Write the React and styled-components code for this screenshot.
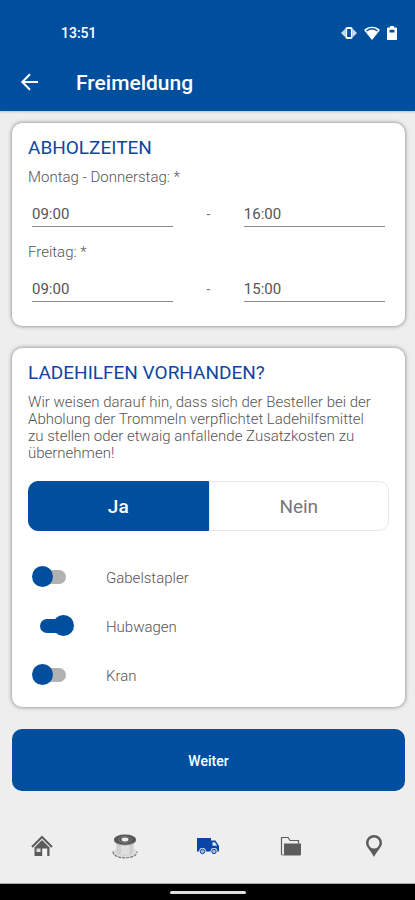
import React, { useState } from 'react';
import styled, { createGlobalStyle } from 'styled-components';

const GlobalStyle = createGlobalStyle`
* {
  box-sizing: border-box;
}
body {
  margin: 0;
  background-color: #eeeeee;
  color: #777777;
  font-family: Roboto, "Liberation Sans", sans-serif;
  font-size: 14px;
}
button, input {
  font-family: inherit;
}
`

const Page = styled.div`
display: flex;
flex-direction: column;
min-height: 100vh;
`
const Header = styled.header`
background-color: #004f9f;
color: white;
box-shadow: 0 1px 2px rgba(0, 0, 0, 0.2);
`
const StatusBar = styled.div`
display: flex;
align-items: center;
justify-content: space-between;
height: 55px;
padding: 11px 18px 0 61px;
font-size: 14px;
font-weight: 500;
`
const StatusIcons = styled.div`
display: flex;
align-items: center;
gap: 7px;
`
const AppBar = styled.div`
display: flex;
align-items: center;
gap: 36px;
height: 56px;
padding: 0 20px;
`
const BackButton = styled.button`
display: flex;
padding: 0;
border: none;
background: none;
color: white;
`
const Title = styled.h1`
margin: 0;
font-size: 21px;
font-weight: 500;
`
const Main = styled.main`
display: flex;
flex-direction: column;
gap: 22px;
padding: 12px 10px 0 12px;
`
const Card = styled.section`
padding: 13px 16px ${props => props.$bottom}px;
background-color: white;
border-radius: 10px;
box-shadow: 0 0 4px rgba(0, 0, 0, 0.5);
`
const CardTitle = styled.h2`
margin: 0 0 9px;
color: #0d47a1;
font-size: 19px;
font-weight: 400;
line-height: 24px;
`
const Hint = styled.p`
margin: 0 0 19px;
padding-right: 8px;
color: #555555;
font-size: 15px;
font-weight: 300;
line-height: 17px;
`
const TimeGroup = styled.fieldset`
min-width: 0;
margin: 0;
padding: 0;
border: none;

& + & {
  margin-top: 17px;
}
`
const TimeLabel = styled.legend`
padding: 0;
color: #555555;
font-size: 15px;
font-weight: 300;
line-height: 17px;
`
const TimeRange = styled.div`
display: grid;
grid-template-columns: 2fr 1fr 2fr;
align-items: center;
padding: 15px 4px 0;
text-align: center;
`
const TimeInput = styled.input`
width: 100%;
height: 26px;
padding: 0;
border: none;
border-bottom: 1px solid #8a8a8a;
border-radius: 0;
background: none;
color: #555555;
font-size: 15px;
outline: none;
`
const Toggle = styled.div`
display: flex;
height: 50px;
margin-bottom: 21px;
`
const ToggleButton = styled.button`
flex: 1;
border: 1px solid ${props => props.$active ? '#004f9f' : '#e8e8e8'};
background-color: ${props => props.$active ? '#004f9f' : 'white'};
color: ${props => props.$active ? 'white' : '#777777'};
font-size: 19px;
font-weight: ${props => props.$active ? 500 : 400};

&:first-child {
  border-radius: 10px 0 0 10px;
}
&:last-child {
  border-radius: 0 10px 10px 0;
}
`
const SwitchRow = styled.label`
display: flex;
align-items: center;
gap: 32px;
height: 49px;
padding-left: 4px;
`
const SwitchText = styled.span`
padding-top: 2px;
color: #555555;
font-size: 15px;
font-weight: 300;
`
const Switch = styled.input`
appearance: none;
display: grid;
align-items: center;
width: 42px;
height: 21px;
margin: 0;

&::before, &::after {
  content: '';
  grid-area: 1 / 1;
  background-color: #004f9f;
}
&::before {
  width: 30px;
  height: 14px;
  margin: 0 4px;
  border-radius: 7px;
  background-color: #b2b2b2;
}
&::after {
  width: 21px;
  height: 21px;
  border-radius: 50%;
}
&:checked {
  justify-items: end;
}
&:checked::before {
  background-color: #004f9f;
}
`
const SubmitButton = styled.button`
height: 62px;
padding-top: 3px;
border: none;
border-radius: 10px;
background-color: #004f9f;
color: white;
font-size: 14px;
font-weight: 500;
`
const TabBar = styled.nav`
display: grid;
grid-template-columns: repeat(5, 1fr);
flex: 1;
min-height: 93px;
border-bottom: 1px solid #aaaaaa;
`
const Tab = styled.a`
display: flex;
align-items: center;
justify-content: center;
padding-top: 17px;
color: ${props => props.$active ? '#0a45a5' : '#5c5c5c'};
`
const SystemBar = styled.div`
display: flex;
align-items: center;
justify-content: center;
height: 16px;
background-color: black;
`
const HomeIndicator = styled.div`
width: 76px;
height: 3px;
border-radius: 2px;
background-color: #dddddd;
`

const VibrateIcon = () => (
    <svg width="16" height="12" viewBox="0 0 16 12">
        <path d="M0 6l4-4v8zM16 6l-4-4v8z" fill="#c9dbef" />
        <rect x="5.2" y="1" width="5.6" height="10" rx="1" fill="none" stroke="white" strokeWidth="1.8" />
    </svg>
)

const WifiIcon = () => (
    <svg width="16" height="14" viewBox="0 0 16 14">
        <path d="M8 14L0 4c4.500-4.200 11.500-4.200 16 0z" fill="white" />
        <path d="M2.500 4.900c3.300-2.600 7.700-2.600 11 0" fill="none" stroke="#004f9f" strokeWidth="1.300" />
    </svg>
)

const BatteryIcon = () => (
    <svg width="10" height="14" viewBox="0 0 10 14">
        <path d="M3 0h4v1.500h2.200q.8 0 .8.800v10.900q0 .8-.8.800H.8q-.8 0-.8-.8V2.300q0-.8.8-.8H3z" fill="white" />
        <path d="M2.500 3.800h5v2.700h-5z" fill="#004f9f" />
    </svg>
)

const BackIcon = () => (
    <svg width="20" height="20" viewBox="0 0 20 20" fill="none" stroke="currentColor" strokeWidth="2">
        <path d="M18 9H3M10 1.300L2.300 9l7.700 7.700" />
    </svg>
)

const HouseIcon = () => (
    <svg width="22" height="22" viewBox="0 0 22 22">
        <path d="M1 12L11 2l10 10" fill="none" stroke="currentColor" strokeWidth="2" />
        <path d="M11 5l7.500 7.500V21h-15v-8.500z" fill="currentColor" />
        <path d="M5.500 13.500h4v3.500h-4z" fill="#dddddd" />
        <path d="M11.200 13.500h5V21h-5z" fill="#f4f4f4" />
    </svg>
)

const DrumIcon = () => (
    <svg width="26" height="26" viewBox="0 0 26 26">
        <ellipse cx="13" cy="19.500" rx="12" ry="5.500" fill="#dedede" />
        <path d="M1 18.500c0 8.500 24 8.500 24 0" fill="none" stroke="#777777" strokeWidth="1.200" strokeDasharray="3 1" />
        <path d="M4.500 7h17v13c-3 3.500-14 3.500-17 0z" fill="#cfcfcf" />
        <path d="M9 11h8v11H9z" fill="#dedede" />
        <ellipse cx="13" cy="7.500" rx="11" ry="5" fill="#8a8a8a" />
        <ellipse cx="13" cy="6.500" rx="11" ry="5" fill="#555555" />
        <ellipse cx="13" cy="6.500" rx="6.500" ry="2.900" fill="none" stroke="#808080" />
        <ellipse cx="13" cy="6.500" rx="3.500" ry="1.900" fill="#eeeeee" />
    </svg>
)

const TruckIcon = () => (
    <svg width="24" height="20" viewBox="0 0 24 20">
        <path d="M1 2h14v13.500H1z" fill="currentColor" />
        <path d="M15 4.500h4.500l3.500 5.500v5.500h-8z" fill="currentColor" />
        <path d="M16.500 6.200h2.300l2.400 3.600h-4.700z" fill="#dfe6f2" />
        <circle cx="6.500" cy="15.500" r="3.400" fill="#eeeeee" />
        <circle cx="18" cy="15.500" r="3.400" fill="#eeeeee" />
        <circle cx="6.500" cy="15.500" r="2.200" fill="#a9bce0" stroke="currentColor" />
        <circle cx="18" cy="15.500" r="2.200" fill="#a9bce0" stroke="currentColor" />
    </svg>
)

const FolderIcon = () => (
    <svg width="22" height="20" viewBox="0 0 22 20">
        <path d="M1.500 18V1.500h6.500l2 3h8.500v3M1.500 18q0 1 1 1" fill="none" stroke="currentColor" strokeWidth="1.200" />
        <path d="M4 7.500h17V18q0 1.500-1.500 1.500h-17Q4 19 4 17.500z" fill="currentColor" />
    </svg>
)

const PinIcon = () => (
    <svg width="18" height="24" viewBox="0 0 18 24">
        <path fillRule="evenodd" d="M9 1a8 8 0 0 1 8 8c0 4-4.500 7-8 14C5.500 16 1 13 1 9a8 8 0 0 1 8-8zM9 3.500a5.500 5.500 0 1 0 0 11 5.500 5.500 0 0 0 0-11z" fill="currentColor" />
    </svg>
)

const tabs = [
    { name: 'Start', href: '#start', Icon: HouseIcon },
    { name: 'Trommeln', href: '#trommeln', Icon: DrumIcon },
    { name: 'Freimeldung', href: '#freimeldung', Icon: TruckIcon, active: true },
    { name: 'Dokumente', href: '#dokumente', Icon: FolderIcon },
    { name: 'Standorte', href: '#standorte', Icon: PinIcon },
]

const TimeRow = ({ label, from, to }) => (
    <TimeGroup>
        <TimeLabel>{label}: *</TimeLabel>
        <TimeRange>
            <TimeInput aria-label={label + ' von'} defaultValue={from} />
            <span>-</span>
            <TimeInput aria-label={label + ' bis'} defaultValue={to} />
        </TimeRange>
    </TimeGroup>
)

const SwitchField = ({ label, on }) => (
    <SwitchRow>
        <Switch type="checkbox" defaultChecked={on} />
        <SwitchText>{label}</SwitchText>
    </SwitchRow>
)

const App = () => {
    const [hasAids, setHasAids] = useState(true)

    return (
        <Page>
            <GlobalStyle />
            <Header>
                <StatusBar>
                    <span>13:51</span>
                    <StatusIcons>
                        <VibrateIcon />
                        <WifiIcon />
                        <BatteryIcon />
                    </StatusIcons>
                </StatusBar>
                <AppBar>
                    <BackButton type="button" aria-label="Zurück"><BackIcon /></BackButton>
                    <Title>Freimeldung</Title>
                </AppBar>
            </Header>
            <Main>
                <Card $bottom={24}>
                    <CardTitle>ABHOLZEITEN</CardTitle>
                    <TimeRow label="Montag - Donnerstag" from="09:00" to="16:00" />
                    <TimeRow label="Freitag" from="09:00" to="15:00" />
                </Card>
                <Card $bottom={8}>
                    <CardTitle>LADEHILFEN VORHANDEN?</CardTitle>
                    <Hint>
                        Wir weisen darauf hin, dass sich der Besteller bei der Abholung der Trommeln verpflichtet Ladehilfsmittel zu stellen oder etwaig anfallende Zusatzkosten zu übernehmen!
                    </Hint>
                    <Toggle>
                        <ToggleButton type="button" aria-pressed={hasAids} $active={hasAids} onClick={() => setHasAids(true)}>Ja</ToggleButton>
                        <ToggleButton type="button" aria-pressed={!hasAids} $active={!hasAids} onClick={() => setHasAids(false)}>Nein</ToggleButton>
                    </Toggle>
                    <SwitchField label="Gabelstapler" />
                    <SwitchField label="Hubwagen" on />
                    <SwitchField label="Kran" />
                </Card>
                <SubmitButton type="button">Weiter</SubmitButton>
            </Main>
            <TabBar>
                {tabs.map(({ name, href, Icon, active }) => (
                    <Tab key={name} href={href} aria-label={name} $active={active}><Icon /></Tab>
                ))}
            </TabBar>
            <SystemBar><HomeIndicator /></SystemBar>
        </Page>
    )
}

export default App
